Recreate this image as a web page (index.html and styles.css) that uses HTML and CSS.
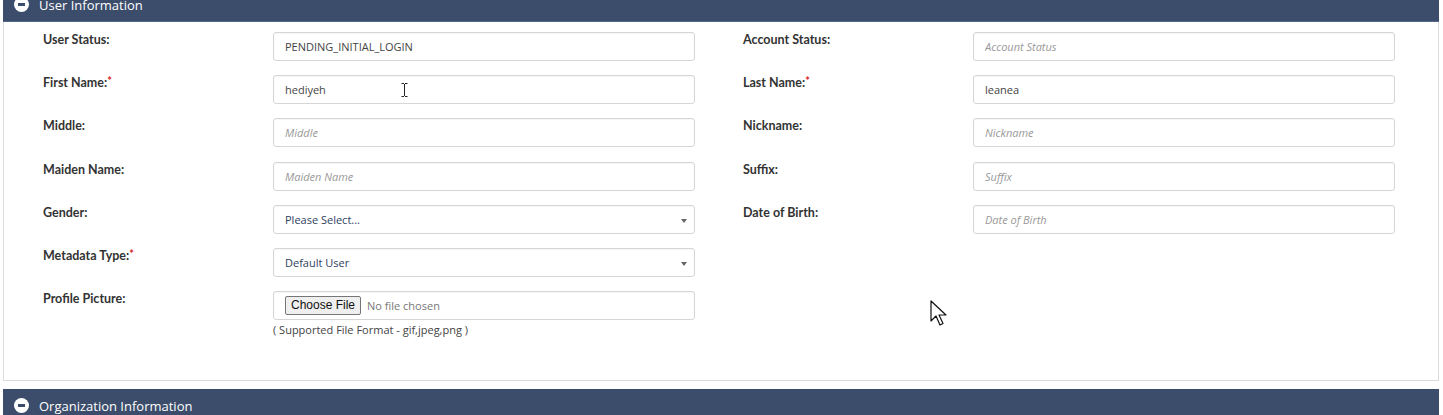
FILE: index.html
```html
<!DOCTYPE html>
<html lang="en">
<head>
    <meta charset="utf-8">
    <title>User Information</title>
    <link rel="stylesheet" href="styles.css">
</head>
<body>
    <div class="page">
        <div class="section-header">
            <span class="toggle-icon"></span>
            <span class="section-title">User Information</span>
        </div>
        <div class="section-body">
            <div class="form-grid">
                <div class="field">
                    <label class="field-label">User Status:</label>
                    <div class="control"><input class="text-input" type="text" value="PENDING_INITIAL_LOGIN" readonly></div>
                </div>
                <div class="field">
                    <label class="field-label">Account Status:</label>
                    <div class="control"><input class="text-input" type="text" placeholder="Account Status"></div>
                </div>

                <div class="field">
                    <label class="field-label">First Name:<span class="required">*</span></label>
                    <div class="control">
                        <input class="text-input" type="text" value="hediyeh">
                        <svg class="ibeam" width="7" height="14" viewBox="0 0 7 14"><path d="M0.5 0.5h2.5M4 0.5h2.5M3.5 1v12M0.5 13.5h2.5M4 13.5h2.5" stroke="#222" stroke-width="1" fill="none"/></svg>
                    </div>
                </div>
                <div class="field">
                    <label class="field-label">Last Name:<span class="required">*</span></label>
                    <div class="control"><input class="text-input" type="text" value="leanea"></div>
                </div>

                <div class="field">
                    <label class="field-label">Middle:</label>
                    <div class="control"><input class="text-input" type="text" placeholder="Middle"></div>
                </div>
                <div class="field">
                    <label class="field-label">Nickname:</label>
                    <div class="control"><input class="text-input" type="text" placeholder="Nickname"></div>
                </div>

                <div class="field">
                    <label class="field-label">Maiden Name:</label>
                    <div class="control"><input class="text-input" type="text" placeholder="Maiden Name"></div>
                </div>
                <div class="field">
                    <label class="field-label">Suffix:</label>
                    <div class="control"><input class="text-input" type="text" placeholder="Suffix"></div>
                </div>

                <div class="field">
                    <label class="field-label">Gender:</label>
                    <div class="control">
                        <div class="select-box">Please Select...<span class="caret"></span></div>
                    </div>
                </div>
                <div class="field">
                    <label class="field-label">Date of Birth:</label>
                    <div class="control"><input class="text-input" type="text" placeholder="Date of Birth"></div>
                </div>

                <div class="field">
                    <label class="field-label">Metadata Type:<span class="required">*</span></label>
                    <div class="control">
                        <div class="select-box">Default User<span class="caret"></span></div>
                    </div>
                </div>
                <div class="field"></div>

                <div class="field">
                    <label class="field-label">Profile Picture:</label>
                    <div class="control">
                        <div class="file-box">
                            <span class="file-button">Choose File</span>
                            <span class="file-name">No file chosen</span>
                        </div>
                        <div class="file-hint">( Supported File Format - gif,jpeg,png )</div>
                    </div>
                </div>
                <div class="field"></div>
            </div>

            <svg class="pointer" width="17" height="26" viewBox="0 0 17 26"><path d="M1 1v20l5-5 4 9 3-1.5-4-8.5h7z" fill="#fff" stroke="#111" stroke-width="1.2" stroke-linejoin="round"/></svg>
        </div>

        <div class="section-header">
            <span class="toggle-icon"></span>
            <span class="section-title">Organization Information</span>
        </div>
    </div>
</body>
</html>
```

FILE: styles.css
```css
body {
    margin: 0;
    background-color: #fff;
    font-family: Lato, "Open Sans", sans-serif;
    color: #333;
    overflow: hidden;
}

.page {
    margin: -12px 4px 0 3px;
}

.section-header {
    display: flex;
    align-items: center;
    height: 34px;
    padding-left: 11px;
    background-color: #3b4d6b;
    border-bottom: 1px solid #56698a;
    box-sizing: border-box;
}

.toggle-icon {
    position: relative;
    width: 15px;
    height: 15px;
    border-radius: 50%;
    background-color: #fff;
    margin-right: 10px;
}

.toggle-icon::after {
    content: "";
    position: absolute;
    left: 4px;
    top: 6px;
    width: 7px;
    height: 3px;
    background-color: #3b4d6b;
}

.section-title {
    color: #fff;
    font-size: 13px;
    font-family: "Open Sans", Lato, sans-serif;
}

.section-body {
    position: relative;
    border: 1px solid #dcdcdc;
    border-top: none;
    padding: 10px 0 43px 39px;
    margin-bottom: 8px;
}

.form-grid {
    display: grid;
    grid-template-columns: 652px 652px;
    column-gap: 48px;
    row-gap: 14.2px;
}

.field {
    display: flex;
    min-height: 29px;
}

.field-label {
    width: 230px;
    flex-shrink: 0;
    font-size: 12.5px;
    font-weight: bold;
    line-height: 16px;
    color: #333;
}

.required {
    color: #d9251d;
    font-size: 11px;
    font-weight: bold;
    vertical-align: top;
    line-height: 12px;
}

.control {
    position: relative;
    width: 422px;
}

.text-input,
.select-box,
.file-box {
    display: flex;
    align-items: center;
    width: 100%;
    height: 29px;
    box-sizing: border-box;
    border: 1px solid #d6d6d6;
    border-radius: 3px;
    box-shadow: inset 0 1px 1px rgba(0, 0, 0, 0.04);
    padding: 0 11px;
    font-family: "Open Sans", Lato, sans-serif;
    font-size: 11px;
    color: #444;
    background-color: #fff;
    outline: none;
}

.text-input::placeholder {
    color: #999;
    font-style: italic;
}

.select-box {
    position: relative;
    color: #2f4262;
}

.caret {
    position: absolute;
    right: 7px;
    top: 13px;
    border-left: 3.5px solid transparent;
    border-right: 3.5px solid transparent;
    border-top: 4px solid #666;
}

.file-box {
    padding-left: 11px;
}

.file-button {
    font-family: "Liberation Sans", Arial, sans-serif;
    font-size: 12px;
    color: #111;
    background-color: #efefef;
    border: 1px solid #767676;
    border-radius: 2px;
    padding: 1px 5px;
    line-height: 15px;
}

.file-name {
    margin-left: 6px;
    color: #777;
    font-size: 11px;
}

.file-hint {
    margin-top: 2px;
    font-family: "Open Sans", Lato, sans-serif;
    font-size: 11px;
    color: #444;
}

.ibeam {
    position: absolute;
    left: 128px;
    top: 8px;
}

.pointer {
    position: absolute;
    left: 926px;
    top: 278px;
}
```
